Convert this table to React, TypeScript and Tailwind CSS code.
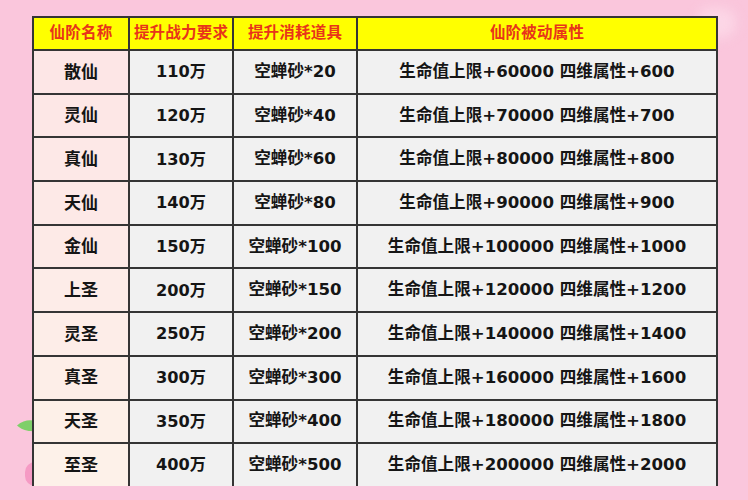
import React from "react";

const rows: [string, string, string, string][] = [
  ["散仙", "110万", "空蝉砂*20", "生命值上限+60000 四维属性+600"],
  ["灵仙", "120万", "空蝉砂*40", "生命值上限+70000 四维属性+700"],
  ["真仙", "130万", "空蝉砂*60", "生命值上限+80000 四维属性+800"],
  ["天仙", "140万", "空蝉砂*80", "生命值上限+90000 四维属性+900"],
  ["金仙", "150万", "空蝉砂*100", "生命值上限+100000 四维属性+1000"],
  ["上圣", "200万", "空蝉砂*150", "生命值上限+120000 四维属性+1200"],
  ["灵圣", "250万", "空蝉砂*200", "生命值上限+140000 四维属性+1400"],
  ["真圣", "300万", "空蝉砂*300", "生命值上限+160000 四维属性+1600"],
  ["天圣", "350万", "空蝉砂*400", "生命值上限+180000 四维属性+1800"],
  ["至圣", "400万", "空蝉砂*500", "生命值上限+200000 四维属性+2000"],
];

const firstColBg = [
  "#fde6e6",
  "#fde7e6",
  "#fde8e7",
  "#fde9e7",
  "#fdeae7",
  "#fdece8",
  "#fdede8",
  "#fdeee8",
  "#fdf0e8",
  "#fdf1e9",
];

export default function App() {
  return (
    <div
      className="relative w-[748px] h-[500px] overflow-hidden bg-[#fac6dc]"
      style={{ fontFamily: '"DejaVu Sans", "Noto Sans CJK SC", sans-serif' }}
    >
      {/* decorations */}
      <svg className="absolute left-[16px] top-[419px]" width="20" height="13" viewBox="0 0 20 13">
        <path d="M1 6.5 C7 1, 14 0.5, 20 2 L20 12 C14 12.5, 7 12, 1 6.5 Z" fill="#7fcf6a" />
      </svg>
      <div className="absolute left-[25px] top-[462px] w-[20px] h-[24px] rounded-full bg-[#f59ac4]" />
      <div className="absolute left-[696px] top-[8px] w-[40px] h-[30px] rounded-full bg-[#fcd6e6] blur-[6px]" />

      <div className="relative ml-[32px] mt-[16px] w-[686px] bg-[#353535] px-[2px] pt-[2px]">
        <div className="grid grid-cols-[94px_102px_122px_358px] gap-[2px]">
          {["仙阶名称", "提升战力要求", "提升消耗道具", "仙阶被动属性"].map((h) => (
            <div
              key={h}
              className="h-[31px] bg-[#ffff00] flex items-center justify-center text-[15.5px] font-bold text-[#e8341a] tracking-[0.2px]"
            >
              {h}
            </div>
          ))}
          {rows.map((r, i) => (
            <React.Fragment key={r[0]}>
              <div
                className="h-[41.7px] pt-[1px] flex items-center justify-center text-[17px] font-bold text-[#151515]"
                style={{ backgroundColor: firstColBg[i] }}
              >
                {r[0]}
              </div>
              <div className="h-[41.7px] pt-[1px] bg-[#f1f1f1] flex items-center justify-center text-[16.2px] font-bold text-[#151515]">
                {r[1]}
              </div>
              <div className="h-[41.7px] pt-[1px] bg-[#f1f1f1] flex items-center justify-center text-[16.6px] font-bold text-[#151515]">
                {r[2]}
              </div>
              <div className="h-[41.7px] pt-[1px] bg-[#f1f1f1] flex items-center justify-center text-[16.6px] font-bold text-[#151515]">
                {r[3]}
              </div>
            </React.Fragment>
          ))}
        </div>
      </div>
    </div>
  );
}
